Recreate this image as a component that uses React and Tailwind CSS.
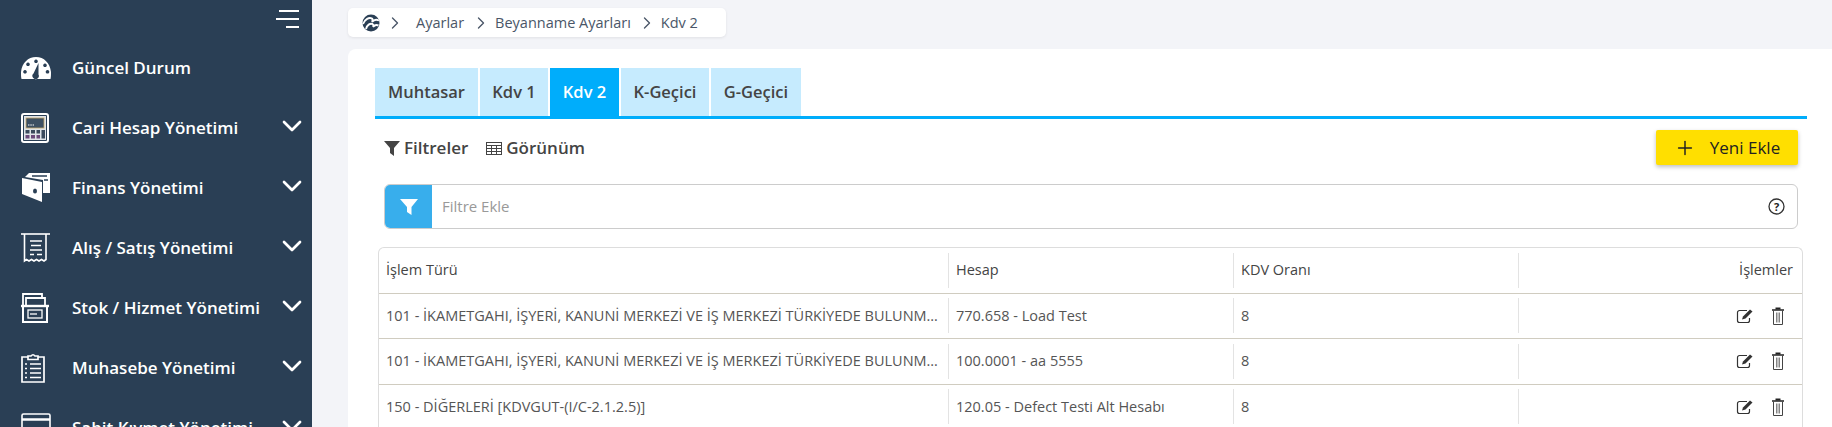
import React from "react";
import { ChevronDown, ChevronRight, Plus } from "lucide-react";

const Gauge = () => (
  <svg width="30" height="24" viewBox="0 0 30 24"><path fill="#fff" fillRule="evenodd" d="M0.500 23 C0 21 0 19 0 16 C1 7 7 1 15 1 C23 1 29 7 30 16 C30 19 30 21 29.500 23 Z M15 3.500a1.800 1.800 0 1 0 .01 0Z M7 6.500a1.800 1.800 0 1 0 .01 0Z M24 7.500a1.800 1.800 0 1 0 .01 0Z M4 14a1.800 1.800 0 1 0 .01 0Z M26.500 14a1.800 1.800 0 1 0 .01 0Z M17.500 7 L12.500 17.500 A3.200 3.200 0 1 0 17.500 18.500 Z"/></svg>
);
const Calc = () => (
  <svg width="28" height="30" viewBox="0 0 28 30"><rect x="1" y="1" width="26" height="28" rx="2" fill="#2a3f55" stroke="#fff" strokeWidth="2"/><rect x="3" y="3" width="22" height="24" fill="#dfe4e8"/><rect x="5" y="5" width="18" height="10" fill="#3d5063" stroke="#c9a86a" strokeWidth=".8"/><path d="M7 12h6" stroke="#fff" strokeDasharray="1.500 .8"/><g fill="#3a4a5c"><rect x="4.500" y="17" width="4" height="3.500"/><rect x="10" y="17" width="4" height="3.500"/><rect x="15.500" y="17" width="3.500" height="3.500"/></g><g fill="#6a4a7a"><rect x="4.500" y="22" width="4" height="3.500"/><rect x="10" y="22" width="4" height="3.500"/><rect x="15.500" y="22" width="3.500" height="3.500"/></g><rect x="20.500" y="17" width="3.500" height="8.500" fill="#3a4a5c"/></svg>
);
const Wallet = () => (
  <svg width="30" height="32" viewBox="0 0 30 32"><path fill="#fff" d="M8 1 L29 1 L29 21 L22 21 L22 8 L4 5 Z"/><path d="M11 4 H26 M23 8 H27" stroke="#2a3f55" strokeWidth="1.300"/><path fill="#fff" d="M1 6 L21 10 L21 30 L1 22 Z"/><ellipse cx="14" cy="19" rx="2" ry="2.500" fill="#2a3f55"/></svg>
);
const Receipt = () => (
  <svg width="30" height="30" viewBox="0 0 30 30" fill="none" stroke="#fff"><path strokeWidth="1.600" d="M0 1h29"/><path strokeWidth="1.600" d="M3.500 1v27l2-1.500 2.500 1.500 2.500-1.500 2.500 1.500 2.500-1.500 2.500 1.500 2.500-1.500 2.500 1.500 2-1.500V1"/><path strokeWidth="1.500" d="M9 8h12M10 12.500h10M9 17h12M9 21.500h4M16 21.500h5"/></svg>
);
const Stock = () => (
  <svg width="28" height="30" viewBox="0 0 28 30" fill="none" stroke="#fff" strokeWidth="1.800"><path d="M2 12V1h19v3M5 12V5h19v7"/><path d="M0 13h28" strokeWidth="2.400"/><path d="M2 14v15h24V14" strokeWidth="2"/><rect x="7" y="17" width="14" height="8" strokeWidth="1.300"/><path d="M9 21h7" strokeWidth="1.300"/></svg>
);
const Clip = () => (
  <svg width="24" height="30" viewBox="0 0 24 30" fill="none" stroke="#fff" strokeWidth="1.700"><path d="M7 4H1v25h22V4h-6M7 6.500V3h3q2-2.500 4 0h3v3.500Z"/><path d="M4 11h2M9 11h11M4 15.500h2M9 15.500h11M4 20h2M9 20h11M4 24.500h2M9 24.500h11"/></svg>
);
const Card = () => (
  <svg width="30" height="30" viewBox="0 0 30 30" fill="none" stroke="#fff" strokeWidth="1.600"><rect x="1" y="1" width="28" height="26" rx="1.500"/><path d="M1 6.500h28" strokeWidth="2.500"/></svg>
);

const menu = [
  ["Güncel Durum", Gauge, false],
  ["Cari Hesap Yönetimi", Calc, true],
  ["Finans Yönetimi", Wallet, true],
  ["Alış / Satış Yönetimi", Receipt, true],
  ["Stok / Hizmet Yönetimi", Stock, true],
  ["Muhasebe Yönetimi", Clip, true],
  ["Sabit Kıymet Yönetimi", Card, true],
];

const tabs = [
  ["Muhtasar", "w-[103px]"],
  ["Kdv 1", "w-[68px]"],
  ["Kdv 2", "w-[69px]"],
  ["K-Geçici", "w-[88px]"],
  ["G-Geçici", "w-[90px]"],
];

const rows = [
  ["101 - İKAMETGAHI, İŞYERİ, KANUNİ MERKEZİ VE İŞ MERKEZİ TÜRKİYEDE BULUNMAYANLAR", "770.658 - Load Test", "8"],
  ["101 - İKAMETGAHI, İŞYERİ, KANUNİ MERKEZİ VE İŞ MERKEZİ TÜRKİYEDE BULUNMAYANLAR", "100.0001 - aa 5555", "8"],
  ["150 - DİĞERLERİ [KDVGUT-(I/C-2.1.2.5)]", "120.05 - Defect Testi Alt Hesabı", "8"],
];

const Edit = () => (
  <svg width="18" height="16" viewBox="0 0 18 16" fill="none"><path d="M11 2.500H3.500A2 2 0 0 0 1.500 4.500v8a2 2 0 0 0 2 2h8a2 2 0 0 0 2-2V10" stroke="#333" strokeWidth="1.200"/><path d="M6 11.500 L7 8.500 L14 1.500 L16.500 3.500 L9.500 10.500 Z" fill="#333"/></svg>
);
const Trash = () => (
  <svg width="12" height="18" viewBox="0 0 12 18" fill="none"><path d="M3.500 2.500V.500h5v2Z" fill="#222"/><path d="M0 3h12" strokeWidth="1.500" stroke="#222"/><path d="M1.500 3.500v14h9v-14" stroke="#444"/><path d="M4.500 5.500v10M6 5.500v10M7.500 5.500v10" strokeWidth=".8" stroke="#666"/></svg>
);

function Row({ cols, header }) {
  const txt = "text-[14.5px] " + (header ? "text-[#444]" : "text-[#555]");
  const cell = "h-[35px] flex items-center border-r border-[#e3e3e3] pl-[7px] pr-[5px] min-w-0 " + txt;
  return (
    <div className="grid grid-cols-[570px_285px_285px_1fr] h-[44.5px] items-center border-b border-[#d0ccc0] box-content">
      <div className={cell}><span className="truncate">{cols[0]}</span></div>
      <div className={cell}><span className="whitespace-nowrap">{cols[1]}</span></div>
      <div className={cell}>{cols[2]}</div>
      <div className={"h-[35px] flex items-center justify-end " + (header ? "pr-[9px] text-[14.5px] text-[#444]" : "pr-[18px] gap-[18px]")}>
        {header ? "İşlemler" : <><Edit /><Trash /></>}
      </div>
    </div>
  );
}

export default function App() {
  return (
    <div className="flex h-[427px] w-[1832px] overflow-hidden bg-[#f3f4f8] font-['Open_Sans',sans-serif]">
      <aside className="w-[312px] shrink-0 bg-[#2a3f55] h-full overflow-hidden">
        <div className="h-[38px] flex justify-end pr-[13px] pt-[10px]">
          <div className="flex flex-col items-end gap-[6px] w-[23px]">
            <span className="h-[2px] w-[20px] bg-white" />
            <span className="h-[2px] w-[23px] bg-white" />
            <span className="h-[2px] w-[13px] bg-white" />
          </div>
        </div>
        <nav>
          {menu.map(([label, Icon, chev]) => (
            <div key={label} className="h-[60px] flex items-center text-white">
              <div className="w-[72px] pl-[21px] flex items-center shrink-0"><Icon /></div>
              <span className="text-[17px] font-semibold whitespace-nowrap">{label}</span>
              {chev && <ChevronDown size={32} strokeWidth={2} className="ml-auto mr-[4px] -translate-y-[2px]" />}
            </div>
          ))}
        </nav>
      </aside>

      <main className="flex-1 min-w-0 pl-[36px]">
        <div className="mt-[8px] h-[29px] w-[378px] bg-white rounded-[5px] shadow-[0_1px_3px_rgba(0,0,0,0.08)] flex items-center pl-[14px] text-[14.5px] text-[#4a5668]">
          <svg width="18" height="18" viewBox="0 0 18 18" className="mr-[5px]"><circle cx="9" cy="9" r="8.500" fill="#2a3f55"/><path d="M1 10 C3 5 7 3 10 4.500 C11 5.500 10.500 7 10 8 C12 5.500 14 5 17 6.500 M4 15 C5 11 8 9 10.500 10 C11.500 10.500 11.500 12 11 13 C12.500 11 14 10.500 16.500 11.500" stroke="#fff" strokeWidth="1.900" fill="none"/></svg>
          <ChevronRight size={20} strokeWidth={1.600} className="mr-[11px]" />
          <span>Ayarlar</span>
          <ChevronRight size={20} strokeWidth={1.600} className="ml-[7px] mr-[4px]" />
          <span>Beyanname Ayarları</span>
          <ChevronRight size={20} strokeWidth={1.600} className="ml-[6px] mr-[4px]" />
          <span>Kdv 2</span>
        </div>

        <section className="mt-[12px] h-[400px] bg-white rounded-tl-[8px] pt-[19px] pl-[27px] pr-[25px]">
          <div className="flex gap-[2px] border-b-[3px] border-[#00adfb] h-[51px]">
            {tabs.map(([t, w]) => (
              <div key={t} className={w + " h-[48px] flex items-center justify-center text-[16.5px] font-semibold " + (t === "Kdv 2" ? "bg-[#00adfb] text-white" : "bg-[#c6ebfe] text-[#444]")}>{t}</div>
            ))}
          </div>

          <div className="flex items-center justify-between pl-[9px] pr-[9px] mt-[11px] h-[35px]">
            <div className="flex items-center text-[17px] font-semibold text-[#444]">
              <svg width="16" height="16" viewBox="0 0 16 16" className="mr-[4px]"><path d="M0 1h16L10 8v8L6 13V8Z" fill="#444"/></svg>
              <span>Filtreler</span>
              <svg width="16" height="13" viewBox="0 0 16 13" fill="none" stroke="#444" className="ml-[18px] mr-[4px] mt-[2px]"><rect x=".5" y=".5" width="15" height="12"/><path d="M.5 3.500h15M.5 6.500h15M.5 9.500h15M5.500 3.500v9M10.500 3.500v9"/></svg>
              <span>Görünüm</span>
            </div>
            <button className="w-[142px] h-[35px] bg-[#ffdf00] rounded-[2px] shadow-[0_2px_4px_rgba(0,0,0,0.25)] flex items-center justify-center gap-[14px] text-[17px] text-[#222]">
              <Plus size={22} strokeWidth={1.600} />
              <span>Yeni Ekle</span>
            </button>
          </div>

          <div className="mt-[19px] ml-[9px] mr-[9px] h-[45px] border border-[#ccc] rounded-[6px] flex items-center overflow-hidden">
            <div className="w-[47px] h-full bg-[#38aeec] flex items-center justify-center">
              <svg width="18" height="18" viewBox="0 0 18 18"><path d="M0 1h18L11.500 9v8L7 14V9Z" fill="#fff"/></svg>
            </div>
            <span className="ml-[10px] text-[15px] text-[#999]">Filtre Ekle</span>
            <svg width="17" height="17" viewBox="0 0 17 17" className="ml-auto mr-[12px]"><circle cx="8.500" cy="8.500" r="7.500" fill="none" stroke="#333" strokeWidth="1.300"/><text x="8.500" y="12.500" textAnchor="middle" fontSize="11" fontWeight="700" fill="#222" fontFamily="Open Sans">?</text></svg>
          </div>

          <div className="mt-[18px] ml-[3px] mr-[4px] border border-b-0 border-[#ddd] rounded-t-[6px] h-[200px]">
            <Row header cols={["İşlem Türü", "Hesap", "KDV Oranı"]} />
            {rows.map((r, i) => <Row key={i} cols={r} />)}
          </div>
        </section>
      </main>
    </div>
  );
}
